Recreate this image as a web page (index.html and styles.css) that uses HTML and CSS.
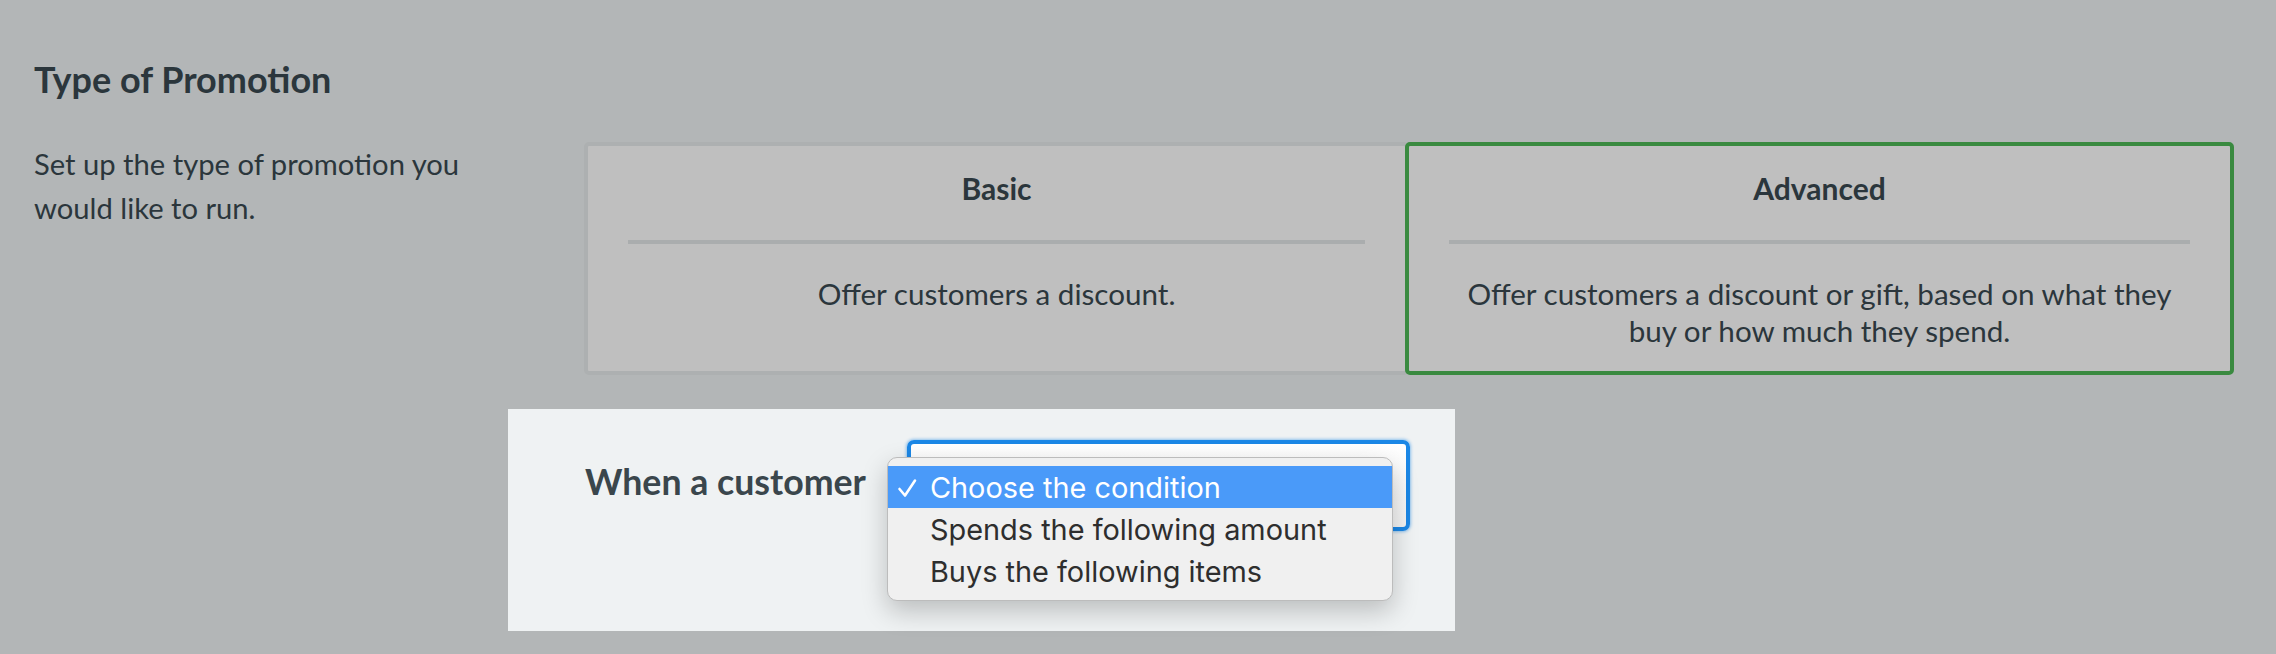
FILE: index.html
```html
<!DOCTYPE html>
<html lang="en">
<head>
<meta charset="utf-8">
<title>Type of Promotion</title>
<link rel="stylesheet" href="styles.css">
</head>
<body>
<div class="page">
  <section class="promo">
    <h2 class="promo-title">Type of Promotion</h2>
    <div class="promo-body">
      <p class="promo-desc">Set up the type of promotion you would like to run.</p>
      <div class="cards">
        <div class="card">
          <div class="card-title">Basic</div>
          <hr class="card-rule">
          <p class="card-text">Offer customers a discount.</p>
        </div>
        <div class="card card--selected">
          <div class="card-title">Advanced</div>
          <hr class="card-rule">
          <p class="card-text">Offer customers a discount or gift, based on what they buy or how much they spend.</p>
        </div>
      </div>
    </div>
  </section>
  <div class="condition">
    <span class="condition-label">When a customer</span>
    <div class="select-wrap">
      <div class="select"></div>
      <ul class="menu">
        <li class="menu-item menu-item--active">
          <svg class="menu-check" viewBox="0 0 20 20" width="20" height="20"><polyline points="2.5,11 8,17.5 18,2.5" fill="none" stroke="#ffffff" stroke-width="2.6" stroke-linecap="round" stroke-linejoin="round"/></svg>
          Choose the condition
        </li>
        <li class="menu-item">Spends the following amount</li>
        <li class="menu-item">Buys the following items</li>
      </ul>
    </div>
  </div>
</div>
</body>
</html>
```

FILE: styles.css
```css
html, body {
  margin: 0;
  padding: 0;
}

body {
  background: #b3b6b7;
  font-family: Lato, "Open Sans", sans-serif;
  color: #2b363c;
  width: 2276px;
  height: 654px;
  overflow: hidden;
}

.page {
  padding: 57px 42px 0 34px;
}

.promo-title {
  margin: 0;
  font-size: 36px;
  line-height: 45px;
  font-weight: 700;
}

.promo-body {
  display: flex;
  margin-top: 40px;
}

.promo-desc {
  flex: none;
  width: 470px;
  margin: 0 80px 0 0;
  font-size: 29.2px;
  line-height: 44px;
}

.cards {
  flex: 1;
  display: grid;
  grid-template-columns: 1fr 1fr;
}

.card {
  background: #bfbfbf;
  border: 4px solid #adb0b1;
  border-radius: 5px;
  padding: 24px 40px 22px;
  text-align: center;
}

.card--selected {
  border-color: #3a8a40;
  margin-left: -4px;
}

.card-title {
  font-size: 30px;
  line-height: 36px;
  font-weight: 700;
}

.card-rule {
  border: 0;
  height: 4px;
  background: #aaadae;
  margin: 34px 0 32px;
}

.card-text {
  margin: 0;
  font-size: 29.6px;
  line-height: 36.7px;
}

.condition {
  margin: 34px 0 0 474px;
  width: 947px;
  box-sizing: border-box;
  padding: 31px 0 100px 77px;
  background: #eff2f3;
  display: flex;
  align-items: center;
  gap: 41px;
}

.condition-label {
  font-size: 35.7px;
  font-weight: 700;
  color: #3a464c;
  line-height: 40px;
  margin-bottom: 7px;
}

.select-wrap {
  position: relative;
  width: 503px;
  height: 91px;
}

.select {
  box-sizing: border-box;
  height: 91px;
  border: 4px solid #1b87e6;
  border-radius: 7px;
  background: linear-gradient(#ffffff, #f3f3f3);
  box-shadow: 0 0 3px 1px rgba(27, 135, 230, 0.45);
}

.menu {
  position: absolute;
  left: -20px;
  top: 17px;
  width: 506px;
  box-sizing: border-box;
  margin: 0;
  padding: 8px 0;
  list-style: none;
  background: #f0f0f0;
  border: 1px solid #bcbcbc;
  border-radius: 10px;
  box-shadow: 0 10px 26px rgba(0, 0, 0, 0.22);
}

.menu-item {
  position: relative;
  height: 42px;
  display: flex;
  align-items: center;
  padding-left: 42px;
  font-family: Inter, "Liberation Sans", sans-serif;
  font-size: 28.9px;
  color: #2e2e2e;
}

.menu-item--active {
  background: #4a9af9;
  color: #ffffff;
}

.menu-check {
  position: absolute;
  left: 9px;
  top: 12px;
}
```
